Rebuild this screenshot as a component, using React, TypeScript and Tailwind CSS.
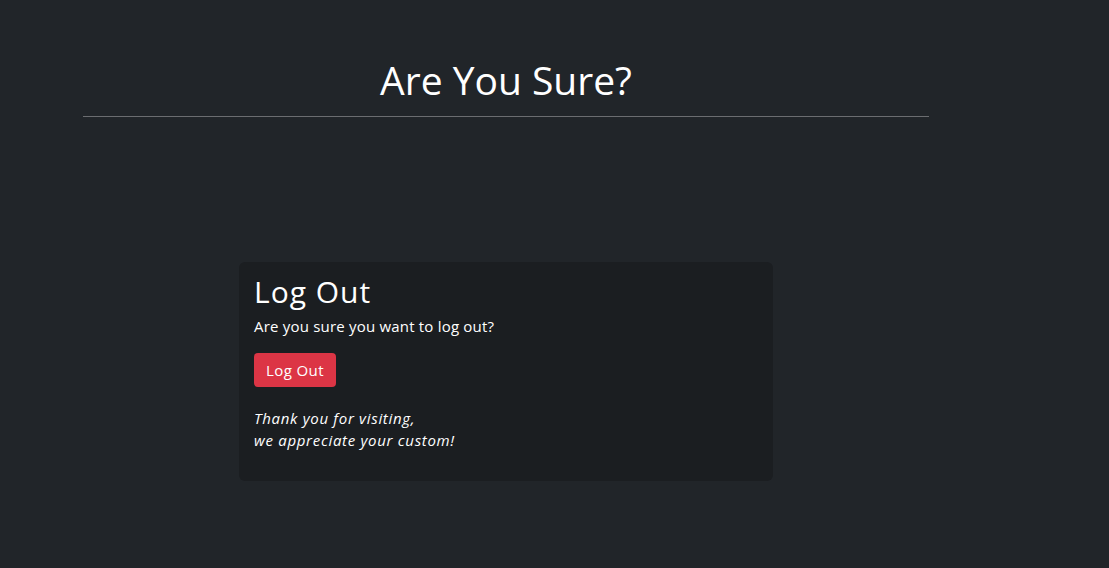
import React from 'react';

const LogoutCard: React.FC = () => {
  return (
    <div className="ml-[239px] mt-[145px] w-[534px] rounded-md bg-[#1b1e21] px-[15px] pt-[12px] pb-[30px]">
      <h2 className="text-[30px] leading-[36px] tracking-[1px] text-white">Log Out</h2>
      <p className="mt-[5px] text-[15px] leading-[22px] tracking-[0.2px] text-white">Are you sure you want to log out?</p>
      <button className="mt-[16px] h-[34px] rounded-[4px] bg-[#dc3545] px-[12px] text-[15px] tracking-[0.4px] text-white">
        Log Out
      </button>
      <p className="mt-[20px] text-[15px] italic leading-[22px] tracking-[0.7px] text-white">
        Thank you for visiting,
        <br />
        we appreciate your custom!
      </p>
    </div>
  );
};

export default function App() {
  return (
    <div className="min-h-screen bg-[#212529] font-['Open_Sans',sans-serif] pt-[56px]">
      <div className="ml-[83px] w-[846px] border-b border-[#6b6d70] pb-[12px]">
        <h1 className="text-center text-[39px] leading-[48px] text-white">Are You Sure?</h1>
      </div>
      <LogoutCard />
    </div>
  );
}
